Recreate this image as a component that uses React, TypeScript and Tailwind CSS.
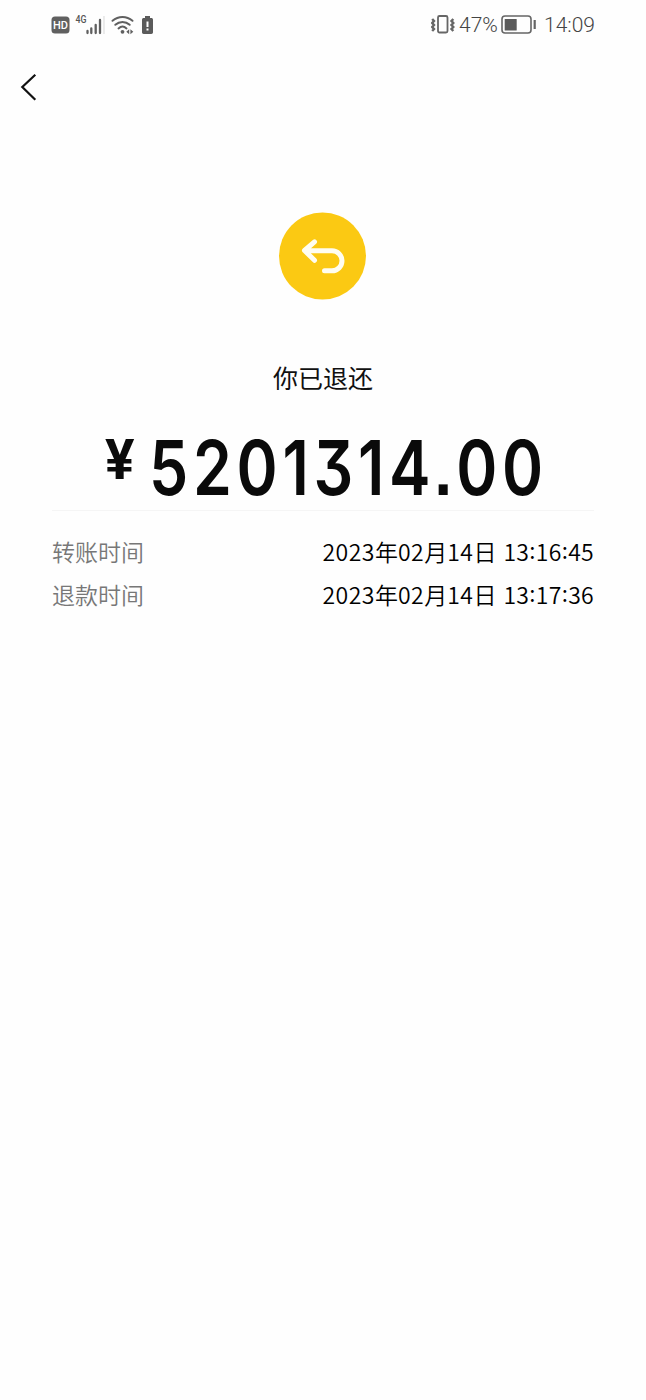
import React from 'react';

type RowProps = {
	label: string;
	day: string;
	time: string[];
};

const rows: RowProps[] = [
	{ label: '转账时间', day: '14', time: ['13', '16', '45'] },
	{ label: '退款时间', day: '14', time: ['13', '17', '36'] },
];

function StatusBar() {
	return (
		<div className="flex h-[50px] items-center justify-between pl-[51px] pr-[51px] text-[#444]">
			<svg width="104" height="24" viewBox="0 0 104 24" fill="none">
				<rect x="0.5" y="3.5" width="18" height="17" rx="3.5" fill="#606060" />
				<text
					x="9.5"
					y="16"
					textAnchor="middle"
					fill="#fff"
					className="font-['Roboto',sans-serif] text-[11px] font-medium"
				>
					HD
				</text>
				<text
					x="24.5"
					y="10"
					textLength="11"
					lengthAdjust="spacingAndGlyphs"
					fill="#555"
					className="font-['Roboto',sans-serif] text-[10.5px] font-medium"
				>
					4G
				</text>
				<path
					d="M36.5 18v2M40.3 15.5v4.5M44.7 12v8M49 7v13"
					stroke="#606060"
					strokeWidth="2.3"
					strokeLinecap="round"
				/>
				<path d="M53 3v18" stroke="#ddd" strokeWidth="1.2" />
				<g stroke="#606060" strokeWidth="2" strokeLinecap="round">
					<path d="M61.5 7.8C67.5 2.7 75.5 2.7 81.5 7.8" />
					<path d="M64.3 11.8c4.2-3.8 10.2-3.8 14.4 0" />
					<path d="M67.5 15.4c2.4-2.2 5.6-2.2 8 0" />
				</g>
				<circle cx="71.5" cy="18.8" r="1.9" fill="#606060" />
				<path d="M75.3 18.8l2.9-2.5v5zM82.3 18.8l-2.9-2.5v5z" fill="#606060" />
				<path
					d="M94 3h5v2h1.3c1 0 1.7.7 1.7 1.7v12.6c0 1-.7 1.7-1.7 1.7h-7.6c-1 0-1.7-.7-1.7-1.7V6.7c0-1 .7-1.7 1.7-1.7H94z"
					fill="#5b5b5b"
				/>
				<path d="M96.5 8.5v5.5M96.5 15.5v2" stroke="#fff" strokeWidth="2" />
			</svg>
			<div className="flex items-center font-['Roboto',sans-serif] text-[21px] font-light leading-6">
				<svg width="24" height="22" viewBox="0 0 24 22" fill="none" stroke="#666">
					<rect x="7" y="2" width="9.5" height="16.5" rx="1.5" strokeWidth="1.8" />
					<path
						d="M1.2 5l1.8 2-1.8 2L3 11l-1.8 2L3 15l-1.8 2M22.3 5l-1.8 2 1.8 2-1.8 2 1.8 2-1.8 2 1.8 2"
						strokeWidth="2.4"
					/>
				</svg>
				<span className="ml-[4px] w-[42px] whitespace-nowrap">47%</span>
				<svg width="36" height="20" viewBox="0 0 36 20" fill="none">
					<rect x="1" y="1" width="29" height="17" rx="3" stroke="#666" strokeWidth="1.6" />
					<rect x="3.7" y="4" width="12" height="11.5" rx="0.5" fill="#5b5b5b" />
					<path d="M33.7 5v9" stroke="#666" strokeWidth="2.2" />
				</svg>
				<span className="ml-[7px]">14:09</span>
			</div>
		</div>
	);
}

function Row({ label, day, time }: RowProps) {
	return (
		<div className="flex h-[43px] items-center justify-between text-[23px] leading-[43px]">
			<span className="font-[350] text-[#777]">{label}</span>
			<span className="flex whitespace-nowrap font-[350] text-black">
				<span className="tracking-[0.5px]">2023</span>年
				<span className="tracking-[0.5px]">02</span>月
				<span className="tracking-[0.5px]">{day}</span>日
				<span className="ml-[7px] flex tracking-[0.3px]">
					{time.map((part, i) => (
						<React.Fragment key={i}>
							{i > 0 && <span className="-mt-[2px]">:</span>}
							<span>{part}</span>
						</React.Fragment>
					))}
				</span>
			</span>
		</div>
	);
}

export default function App() {
	return (
		<div className="h-[1400px] w-[646px] overflow-hidden bg-[#fefefe] font-['Noto_Sans_CJK_SC',sans-serif]">
			<StatusBar />
			<div className="flex h-[74px] items-center pl-[20px]">
				<svg width="18" height="28" viewBox="0 0 18 28" fill="none">
					<path d="M15.3 1.7L2.3 14l13 12.7" stroke="#111" strokeWidth="2.2" />
				</svg>
			</div>
			<div className="mt-[88px] flex justify-center">
				<svg width="88" height="88" viewBox="0 0 88 88" fill="none">
					<circle cx="43.5" cy="44" r="43.5" fill="#fbc913" />
					<path
						d="M35.5 29.8L25.5 38.5l10 9.8M27 38.8h26a10 10 0 0 1 0 20H45.5"
						stroke="#fffdf0"
						strokeWidth="5"
						strokeLinecap="round"
						strokeLinejoin="round"
					/>
				</svg>
			</div>
			<p className="mt-[59px] text-center text-[25px] leading-[36px] text-[#111]">
				你已退还
			</p>
			<div className="mx-[52px] flex h-[116px] items-start border-b border-[#f5f5f5] pl-[53px] text-[#0a0a0a]">
				<span className="mt-[37px] w-[44px] shrink-0 font-['Roboto',sans-serif] text-[55px] font-bold leading-[56px]">
					¥
				</span>
				<span className="mt-[26px] origin-left scale-x-[0.82] whitespace-nowrap font-['Inter',sans-serif] text-[76px] font-semibold leading-[92px] tracking-[5.8px] [font-feature-settings:'cv09','ss07']">
					5201314.00
				</span>
			</div>
			<div className="mx-[52px] mt-[19px]">
				{rows.map((row) => (
					<Row key={row.label} {...row} />
				))}
			</div>
		</div>
	);
}
